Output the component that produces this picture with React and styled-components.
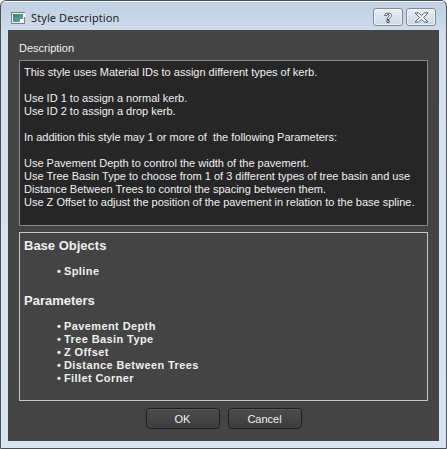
import styled, { createGlobalStyle } from 'styled-components'

const Global = createGlobalStyle`
  html, body { margin: 0; padding: 0; background: #ffffff; }
  * { box-sizing: border-box; }
`

const UI = "'Liberation Sans', Arial, sans-serif"

const descLines = [
  'This style uses Material IDs to assign different types of kerb.',
  '',
  'Use ID 1 to assign a normal kerb.',
  'Use ID 2 to assign a drop kerb.',
  '',
  'In addition this style may 1 or more of  the following Parameters:',
  '',
  'Use Pavement Depth to control the width of the pavement.',
  'Use Tree Basin Type to choose from 1 of 3 different types of tree basin and use',
  'Distance Between Trees to control the spacing between them.',
  'Use Z Offset to adjust the position of the pavement in relation to the base spline.',
]

const params = ['Pavement Depth', 'Tree Basin Type', 'Z Offset', 'Distance Between Trees', 'Fillet Corner']

const App = () => {
  return (
    <>
      <Global />
      <Window>
        <TitleBar>
          <AppIcon width="15" height="12" viewBox="0 0 15 12">
            <defs>
              <linearGradient id="ic" x1="0" y1="0" x2="1" y2="1">
                <stop offset="0" stopColor="#2f8a5a" />
                <stop offset="1" stopColor="#6fa6c8" />
              </linearGradient>
            </defs>
            <rect x="0.5" y="0.5" width="13" height="11" fill="#f4f4f4" stroke="#7d7d7d" />
            <rect x="2" y="2" width="10" height="8" fill="url(#ic)" />
            <rect x="9" y="7" width="3" height="3" fill="#ffffff" />
            <rect x="13" y="1" width="1.5" height="4" fill="#ffffff" />
          </AppIcon>
          <Title>Style Description</Title>
          <Caps>
            <CapButton>
              <svg width="12" height="13" viewBox="0 0 12 13">
                <path d="M2.5 4.5 C2.5 1.5 9.5 1.5 9.5 4.5 C9.5 6.5 7 6.8 7 8.5 L5 8.5 C5 6 7.3 5.8 7.3 4.6 C7.3 3.2 4.7 3.2 4.7 4.6 Z" fill="#ffffff" stroke="#4b4f56" strokeWidth="0.9" strokeLinejoin="round" />
                <rect x="5" y="9.6" width="2" height="2" fill="#ffffff" stroke="#4b4f56" strokeWidth="0.9" />
              </svg>
            </CapButton>
            <CapButton>
              <svg width="15" height="11" viewBox="0 0 15 11">
                <path d="M1 1 H4.5 L7.5 3.6 L10.5 1 H14 L9.5 5.5 L14 10 H10.5 L7.5 7.4 L4.5 10 H1 L5.5 5.5 Z" fill="#ffffff" stroke="#4b4f56" strokeWidth="0.9" strokeLinejoin="round" />
              </svg>
            </CapButton>
          </Caps>
        </TitleBar>
        <Client>
          <Label>Description</Label>
          <TextBox>
            {descLines.map((l, i) => (
              <Line key={i}>{l || '\u00a0'}</Line>
            ))}
          </TextBox>
          <InfoBox>
            <Heading>Base Objects</Heading>
            <Bullets $gap="11px">
              <li>Spline</li>
            </Bullets>
            <Heading $top="15px">Parameters</Heading>
            <Bullets $gap="11px">
              {params.map(p => <li key={p}>{p}</li>)}
            </Bullets>
          </InfoBox>
          <ButtonRow>
            <Button>OK</Button>
            <Button>Cancel</Button>
          </ButtonRow>
        </Client>
      </Window>
    </>
  )
}

const Window = styled.div`
  width: 447px;
  height: 449px;
  border: 1px solid #4e5054;
  border-radius: 6px 6px 0 0;
  background: linear-gradient(to bottom, #bfd0e2 0px, #d3e0ee 40px, #d8e4f1 100%);
  display: flex;
  flex-direction: column;
  overflow: hidden;
`

const TitleBar = styled.div`
  height: 29px;
  display: flex;
  align-items: center;
  padding: 4px 10px 0 10px;
  box-shadow: inset 0 1px 0 #eef3f9;
`

const AppIcon = styled.svg`
  flex: none;
`

const Title = styled.div`
  margin-left: 5px;
  font-family: 'Noto Sans', 'Open Sans', sans-serif;
  font-size: 11px;
  letter-spacing: 0.1px;
  color: #1e2228;
  flex: 1;
`

const Caps = styled.div`
  display: flex;
  gap: 3px;
  margin-top: -1px;
`

const CapButton = styled.div`
  width: 30px;
  height: 18px;
  border: 1px solid #7f8a98;
  border-radius: 3px;
  background: linear-gradient(to bottom, #e8eef5, #cdd9e6);
  box-shadow: inset 0 0 0 1px rgba(255, 255, 255, 0.6);
  display: flex;
  align-items: center;
  justify-content: center;
`

const Client = styled.div`
  flex: 1;
  margin: 0 7px 7px 7px;
  background: #444444;
  padding: 11px 11px 0 11px;
  display: flex;
  flex-direction: column;
  font-family: ${UI};
  font-size: 11px;
  color: #f0f0f0;
`

const Label = styled.div`
  line-height: 14px;
  height: 14px;
  margin-bottom: 5px;
`

const TextBox = styled.div`
  height: 166px;
  border: 1px solid #8a8a8a;
  background: #262626;
  padding: 5px 4px 0 4px;
`

const Line = styled.div`
  line-height: 13px;
  white-space: pre;
`

const InfoBox = styled.div`
  margin-top: 6px;
  height: 169px;
  border: 1px solid #c4c4c4;
  padding: 5px 4px 0 4px;
`

const Heading = styled.div`
  font-weight: bold;
  font-size: 13px;
  line-height: 16px;
  margin-top: ${p => p.$top || '0'};
`

const Bullets = styled.ul`
  list-style: none;
  margin: ${p => p.$gap} 0 0 0;
  padding: 0 0 0 33px;
  font-weight: bold;
  letter-spacing: 0.4px;
  li {
    line-height: 13px;
  }
  li::before {
    content: '\u2022';
    display: inline-block;
    width: 7px;
  }
`

const ButtonRow = styled.div`
  display: flex;
  justify-content: center;
  gap: 8px;
  margin-top: 7px;
`

const Button = styled.button`
  width: 74px;
  height: 21px;
  border: 1px solid #1f1f1f;
  border-radius: 4px;
  background: linear-gradient(to bottom, #4c4c4c, #3d3d3d);
  box-shadow: inset 0 1px 0 #5a5a5a;
  color: #f0f0f0;
  font-family: ${UI};
  font-size: 11px;
  padding: 0;
`

export default App
